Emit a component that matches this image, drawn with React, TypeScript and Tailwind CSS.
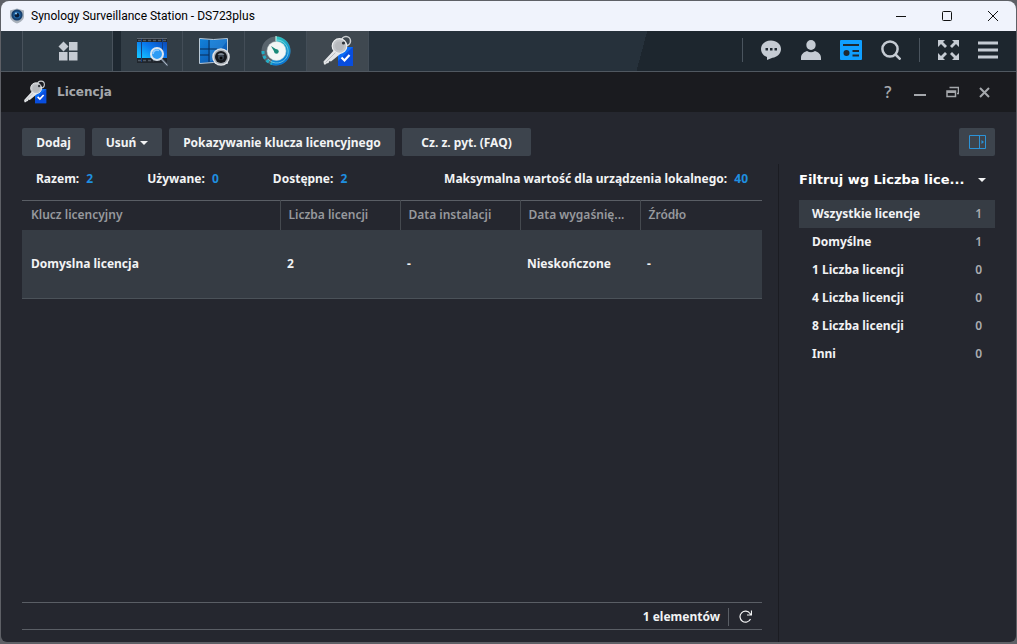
import { useState } from 'react';
import { clsx } from 'clsx';

const stats = [
  { label: 'Razem:', value: 2 },
  { label: 'Używane:', value: 0 },
  { label: 'Dostępne:', value: 2 },
];

const filters = [
  { name: 'Wszystkie licencje', count: 1 },
  { name: 'Domyślne', count: 1 },
  { name: '1 Liczba licencji', count: 0 },
  { name: '4 Liczba licencji', count: 0 },
  { name: '8 Liczba licencji', count: 0 },
  { name: 'Inni', count: 0 },
];

const columns = ['Klucz licencyjny', 'Liczba licencji', 'Data instalacji', 'Data wygaśnię...', 'Źródło'];

const licenses = [
  { key: 'Domyslna licencja', count: '2', installed: '-', expires: 'Nieskończone', source: '-' },
];

const StationIcon = () => (
  <svg viewBox="0 0 16 16" className="h-4 w-4">
    <path d="M1 2.500 8 .5l7 2v6c0 3-3 5.500-7 7-4-1.500-7-4-7-7z" fill="#a9b1bb" />
    <circle cx="8" cy="7" r="5.600" fill="#17406f" />
    <circle cx="8" cy="7" r="3.600" fill="#1f66a8" />
    <circle cx="8" cy="7.300" r="2.300" fill="#0a1c38" />
    <circle cx="7" cy="5.600" r="1" fill="#9fd0f2" />
  </svg>
);

const SearchVideoIcon = () => (
  <svg viewBox="0 0 32 32" className="h-8 w-8">
    <defs>
      <linearGradient id="film" x1="0" x2="1" y1=".8" y2="0">
        <stop offset="0" stopColor="#14c0ff" />
        <stop offset=".5" stopColor="#0a78ee" />
        <stop offset="1" stopColor="#0c48b4" />
      </linearGradient>
    </defs>
    <path d="M1 3h30v25H1z" fill="#20262d" />
    <path d="M1 7h30v16H1z" fill="url(#film)" />
    <path d="M5.500 3v24M26.500 3v20" stroke="#173f80" />
    <path d="M1 3.500h30" stroke="#6d7681" strokeWidth=".8" />
    <path d="M2 5.500h29M2 25.500h16" stroke="#505a65" strokeWidth="1.600" strokeDasharray="3 2" />
    <path d="m25.500 24 5.500 6" stroke="#4f5c6b" strokeWidth="2.500" strokeLinecap="round" />
    <path d="m25.500 24 5.500 6" stroke="#b0bbc7" strokeLinecap="round" />
    <circle cx="21" cy="19" r="6" fill="#2d9cf5" stroke="#dce5ee" strokeWidth="2" />
    <path d="M17 19a4 4 0 0 1 6-3.500" fill="none" stroke="#8cc9ff" strokeWidth="1.500" />
  </svg>
);

const MonitorIcon = () => (
  <svg viewBox="0 0 32 32" className="h-8 w-8">
    <defs>
      <linearGradient id="monitor" x1="0" x2="1" y1="0" y2="1">
        <stop offset="0" stopColor="#1283dc" />
        <stop offset="1" stopColor="#0b4ea6" />
      </linearGradient>
    </defs>
    <path d="M1.500 3.500q14 2 28 0v25q-14-2-28 0z" fill="url(#monitor)" stroke="#b9c8d6" />
    <path d="M12 5q9 .5 17-1v2L14 26h-2z" fill="#41a3ee" opacity=".35" />
    <path d="M11 5v22M2 14h9M2 20h9M11 14h8" stroke="#0b2c54" />
    <circle cx="23" cy="22" r="8.800" fill="#e2e5e8" />
    <circle cx="23" cy="22" r="7.400" fill="#a5acb3" />
    <circle cx="23" cy="22" r="6" fill="#14181d" />
    <circle cx="23" cy="22" r="3" fill="#394552" />
    <path d="M19.500 20a4 4 0 0 1 7 0z" fill="#77838f" />
    <circle cx="23" cy="23" r="1.500" fill="#050608" />
  </svg>
);

const TimelineIcon = () => (
  <svg viewBox="0 0 32 32" className="h-8 w-8">
    <defs>
      <linearGradient id="dial" x1="0" x2=".4" y1="0" y2="1">
        <stop offset="0" stopColor="#35d1bd" />
        <stop offset="1" stopColor="#0876d2" />
      </linearGradient>
    </defs>
    <circle cx="16" cy="16" r="14.500" fill="#59646d" />
    <path d="M16 1.500A14.500 14.500 0 1 1 10 29.200L16 16z" fill="url(#dial)" />
    <path d="M3 16A13 13 0 0 0 12 28.500" fill="none" stroke="#23afc7" strokeWidth="3" strokeDasharray="3 2" />
    <path d="M17 5A11.500 11.500 0 1 1 8 24" fill="none" stroke="#9deaf2" opacity=".6" />
    <circle cx="16.500" cy="16" r="9.500" fill="#f2f6f5" stroke="#cad7d7" strokeWidth=".5" />
    <path d="m11 11 7 4.500-3 2.500z" fill="#198a78" />
    <circle cx="16.500" cy="16.500" r="2.200" fill="#198a78" />
    <path d="M16 1v5" stroke="#d7fff7" />
  </svg>
);

const LicenseIcon = ({ className }: { className: string }) => (
  <svg viewBox="0 0 32 32" className={className}>
    <path d="M16 12h15v19H16z" fill="#0b6cf5" />
    <path d="M16 26 31 12v19H16z" fill="#0639cf" opacity=".6" />
    <path d="m19.500 22.500 3 3 5-5.500" fill="none" stroke="#fff" strokeWidth="2.200" />
    <circle cx="24" cy="6" r="4.500" fill="none" stroke="#c9cdd0" strokeWidth="1.500" />
    <path d="m14 13 5.500 5L9 26.500l-1.500-.5-1 2-2 .5-1 1H2l-.5-3z" fill="#e4e6e8" />
    <path d="m15 16-11.500 11.500" stroke="#aeb3b8" strokeWidth=".8" />
    <circle cx="17.500" cy="11" r="7.300" fill="#c2c5c9" stroke="#eceeef" strokeWidth="1.200" />
    <circle cx="17.500" cy="11" r="4.500" fill="#adb1b6" opacity=".6" />
    <circle cx="21.500" cy="8" r="1.600" fill="#30353b" />
  </svg>
);

const Caret = () => (
  <svg viewBox="0 0 8 4" className="h-1 w-2 fill-current">
    <path d="M0 0h8L4 4z" />
  </svg>
);

const taskIcons = [
  { name: 'Wyszukiwanie', icon: <SearchVideoIcon /> },
  { name: 'Monitor', icon: <MonitorIcon /> },
  { name: 'Oś czasu', icon: <TimelineIcon /> },
  { name: 'Licencja', icon: <LicenseIcon className="h-8 w-8" /> },
];

const TitleBar = () => (
  <header className="flex h-[30px] items-center rounded-t-lg bg-[#f0f3fc] pl-2 text-black">
    <StationIcon />
    <h1 className="ml-1.5 flex-1 font-['Roboto'] text-xs font-normal">Synology Surveillance Station - DS723plus</h1>
    <div className="flex">
      <button aria-label="Minimalizuj" className="flex h-[30px] w-[46px] items-center justify-center">
        <svg viewBox="0 0 10 10" className="h-2.5 w-2.5"><path d="M0 5.500h10" stroke="#111" /></svg>
      </button>
      <button aria-label="Maksymalizuj" className="flex h-[30px] w-[46px] items-center justify-center">
        <svg viewBox="0 0 10 10" className="h-2.5 w-2.5"><rect x=".5" y=".5" width="9" height="9" rx="1" fill="none" stroke="#111" /></svg>
      </button>
      <button aria-label="Zamknij" className="flex h-[30px] w-[46px] items-center justify-center">
        <svg viewBox="0 0 10 10" className="h-2.5 w-2.5"><path d="m0 0 10 10M10 0 0 10" stroke="#111" /></svg>
      </button>
    </div>
  </header>
);

const TaskBar = () => (
  <nav className="flex h-[41px] items-stretch border-b border-[#505860] bg-linear-[105deg] from-[#26313b] from-63% to-[#1d262e] to-63% text-[#c5cbd3]">
    <div className="w-[21px] bg-[#2d3842]" />
    <button aria-label="Menu główne" className="flex w-[91px] items-center justify-center border-x border-[#48525c] bg-[#303c45]">
      <svg viewBox="0 0 20 20" className="h-5 w-5 fill-current">
        <path d="m5.500.5 5 5-5 5-5-5z" />
        <path d="M11 1h8.500v8.500H11zM1 11h8.500v8.500H1zM11 11h8.500v8.500H11z" />
      </svg>
    </button>
    <div className="w-2 bg-[#1e2831]" />
    {taskIcons.map(({ name, icon }) => (
      <button
        key={name}
        aria-label={name}
        className={clsx(
          'flex w-[62px] items-center justify-center border-r border-[#434d57]',
          name === 'Licencja' ? 'bg-[#3f4850]' : 'bg-[#323d46]'
        )}
      >
        {icon}
      </button>
    ))}
    <div className="flex-1" />
    <div className="flex items-center pr-[18px] pb-0.5">
      <div className="mr-[18px] h-6 w-px bg-[#4a545e]" />
      <div className="flex items-center gap-5">
        <button aria-label="Czat">
          <svg viewBox="0 0 20 20" className="h-5 w-5">
            <path d="M10 .5c5.700 0 10 3.600 10 8.500s-4 8.300-8.500 8.700L6 20v-3C2.300 15.500 0 12.700 0 9 0 4.100 4.300.5 10 .5z" fill="#c5cbd3" />
            <path d="M4.500 8h2.500v2.500H4.500zM9 8h2.500v2.500H9zM13.500 8H16v2.500h-2.500z" fill="#1f2831" />
          </svg>
        </button>
        <button aria-label="Użytkownik">
          <svg viewBox="0 0 20 20" className="h-5 w-5 fill-current">
            <ellipse cx="10" cy="5" rx="4.700" ry="5" />
            <path d="M0 20v-2c0-4 3-6 6-7q4 2.500 8 0c3 1 6 3 6 7v2z" />
          </svg>
        </button>
        <button aria-label="Powiadomienia" className="-mx-px">
          <svg viewBox="0 0 22 20" className="h-5 w-[22px]">
            <rect width="22" height="20" rx="1" fill="#109fff" />
            <path d="M3 5h16M12.500 11H19M12.500 15.500H19" stroke="#1f2831" strokeWidth="2" />
            <circle cx="6.500" cy="13" r="3" fill="#1f2831" />
          </svg>
        </button>
        <button aria-label="Szukaj">
          <svg viewBox="0 0 20 20" className="h-5 w-5 fill-none stroke-current stroke-[2.5]">
            <circle cx="9" cy="9" r="7.600" />
            <path d="m14.500 14.500 5 5" />
          </svg>
        </button>
      </div>
      <div className="mx-[18px] h-6 w-px bg-[#4a545e]" />
      <div className="flex items-center gap-[19px]">
        <button aria-label="Pełny ekran">
          <svg viewBox="0 0 21 20" className="h-5 w-[21px] fill-current">
            <path d="M0 0h7L5 2l4 4-2 2-4-4L0 7zM21 0h-7l2 2-4 4 2 2 4-4L21 7zM0 20h7l-2-2 4-4-2-2-4 4L0 13zM21 20h-7l2-2-4-4 2-2 4 4L21 13z" />
          </svg>
        </button>
        <button aria-label="Menu">
          <svg viewBox="0 0 20 18" className="h-[18px] w-5 stroke-current stroke-[3]"><path d="M0 2h20M0 9h20M0 16h20" /></svg>
        </button>
      </div>
    </div>
  </nav>
);

const WindowHeader = () => (
  <div className="flex h-10 items-center bg-[#1a1b1f] pr-[26px] pl-[22px] text-[#a5a8ac]">
    <LicenseIcon className="h-6 w-6" />
    <h2 className="ml-2.5 flex-1 font-['DejaVu_Sans'] text-xs font-bold">Licencja</h2>
    <div className="flex items-center gap-5">
      <button className="w-3 font-['Open_Sans'] text-base font-semibold">?</button>
      <button aria-label="Minimalizuj okno">
        <svg viewBox="0 0 12 12" className="h-3 w-3"><path d="M0 9h12" stroke="currentColor" strokeWidth="2" /></svg>
      </button>
      <button aria-label="Przywróć okno">
        <svg viewBox="0 0 13 12" className="h-3 w-[13px] fill-none stroke-current">
          <path d="M3.500 1.500h9v6H11" strokeWidth="1.500" />
          <path d="M1 5h8.500v5.500H1z" strokeWidth="1.500" />
          <path d="M1 6h8.500" strokeWidth="2" />
        </svg>
      </button>
      <button aria-label="Zamknij okno">
        <svg viewBox="0 0 11 11" className="h-[11px] w-[11px]"><path d="m1 1 9 9M10 1l-9 9" stroke="currentColor" strokeWidth="2" /></svg>
      </button>
    </div>
  </div>
);

const toolButton = 'flex h-7 items-center justify-center gap-1 rounded-xs bg-[#3d444d] pt-px whitespace-nowrap';

const Toolbar = () => (
  <div className="flex gap-[7px]">
    <button className={clsx(toolButton, 'min-w-[63px]')}>Dodaj</button>
    <button className={clsx(toolButton, 'min-w-[70px]')}>
      Usuń
      <Caret />
    </button>
    <button className={clsx(toolButton, 'min-w-[226px]')}>Pokazywanie klucza licencyjnego</button>
    <button className={clsx(toolButton, 'min-w-[129px]')}>Cz. z. pyt. (FAQ)</button>
    <button aria-label="Panel filtrów" className="ml-auto flex h-7 w-9 items-center justify-center rounded-xs bg-[#3d444d]">
      <svg viewBox="0 0 17 14" className="h-3.5 w-[17px]">
        <path d="M.5.5h16v13H.5zM10.500.5v13" fill="none" stroke="#2b93d8" />
        <path d="m12.500 5 2.500 2-2.500 2z" fill="#2b93d8" />
      </svg>
    </button>
  </div>
);

const LicenseTable = () => (
  <table className="w-full table-fixed border-t border-[#5a5e65] text-left">
    <colgroup>
      <col />
      <col className="w-[120px]" />
      <col className="w-[120px]" />
      <col className="w-[120px]" />
      <col className="w-[122px]" />
    </colgroup>
    <thead>
      <tr className="h-[29px] text-[#97999d]">
        {columns.map((column, i) => (
          <th key={column} className={clsx('truncate font-semibold', i ? 'border-l border-[#45494f] pl-2' : 'pl-[9px]')}>
            {column}
          </th>
        ))}
      </tr>
    </thead>
    <tbody>
      {licenses.map((license) => (
        <tr key={license.key} className="h-[69px] border-b border-[#4b5259] bg-[#363c44]">
          <td className="pl-[9px]">{license.key}</td>
          <td className="pl-[7px]">{license.count}</td>
          <td className="pl-[7px]">{license.installed}</td>
          <td className="pl-[7px]">{license.expires}</td>
          <td className="pl-[7px]">{license.source}</td>
        </tr>
      ))}
    </tbody>
  </table>
);

const FilterPanel = () => {
  const [active, setActive] = useState(filters[0].name);

  return (
    <aside className="mt-2 w-[217px] shrink-0 border-l border-[#1b1c22] pl-5">
      <div className="relative flex h-8 items-center">
        <select
          aria-label="Filtruj"
          className="w-full appearance-none bg-transparent font-['DejaVu_Sans'] text-[13px] font-bold text-white"
        >
          <option>Filtruj wg Liczba lice...</option>
        </select>
        <span className="pointer-events-none absolute right-[9px]">
          <Caret />
        </span>
      </div>
      <ul className="mt-1">
        {filters.map(({ name, count }) => (
          <li key={name}>
            <button
              onClick={() => setActive(name)}
              className={clsx('flex h-7 w-full items-center justify-between px-[13px]', active === name && 'bg-[#363c44]')}
            >
              <span>{name}</span>
              <span className="font-semibold text-[#aaacaf]">{count}</span>
            </button>
          </li>
        ))}
      </ul>
    </aside>
  );
};

export default function App() {
  return (
    <div className="flex min-h-screen flex-col bg-[#5e6066] p-px pb-0.5 font-['Noto_Sans',sans-serif] text-xs font-bold text-[#f2f3f4]">
      <TitleBar />
      <TaskBar />
      <WindowHeader />
      <main className="flex flex-1 flex-col rounded-b-md bg-[#25272f] pt-4 pr-[21px] pl-[21px]">
        <Toolbar />
        <div className="flex flex-1">
          <section className="flex min-w-0 flex-1 flex-col pr-4 pb-3">
            <div className="flex h-11 items-center gap-[54px] px-3.5 pt-0.5">
              {stats.map(({ label, value }) => (
                <p key={label}>
                  {label} <span className="ml-1 text-[#1f8fe0]">{value}</span>
                </p>
              ))}
              <p className="ml-auto">
                Maksymalna wartość dla urządzenia lokalnego: <span className="ml-1 text-[#1f8fe0]">40</span>
              </p>
            </div>
            <LicenseTable />
            <footer className="mt-auto flex h-7 items-center justify-end border-y border-[#5a5e65] pt-px pr-2">
              <span>1 elementów</span>
              <div className="mx-2 h-[18px] w-px bg-[#5a5e65]" />
              <button aria-label="Odśwież" className="p-0.5">
                <svg viewBox="0 0 13 13" className="h-[13px] w-[13px] fill-none stroke-current">
                  <path d="M11.500 9A5.500 5.500 0 1 1 11 3.500l1 1.500M12.500.5V5H8" strokeWidth="1.200" />
                </svg>
              </button>
            </footer>
          </section>
          <FilterPanel />
        </div>
      </main>
    </div>
  );
}
